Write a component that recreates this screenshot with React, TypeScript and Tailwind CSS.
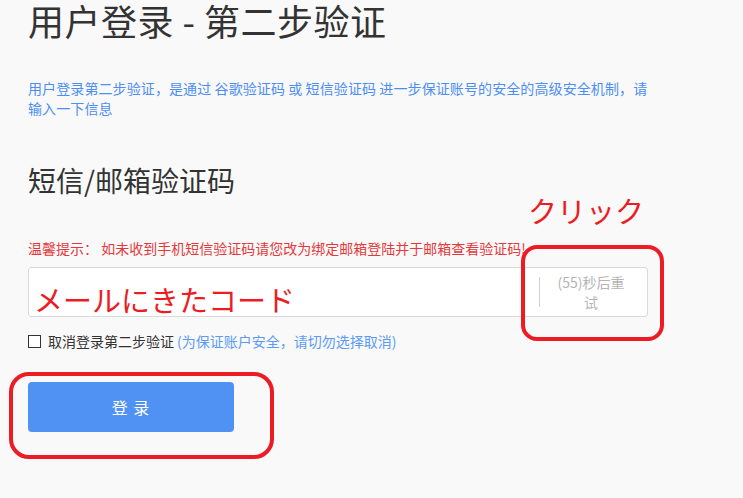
import React from "react";

const cn = '"Noto Sans CJK SC", "Noto Sans", sans-serif';
const jp = '"Noto Sans CJK JP", "Noto Sans", sans-serif';

export default function App() {
  return (
    <div
      className="relative min-h-[498px] w-full overflow-hidden bg-[#f9f9f9] pl-[28px] text-[#333]"
      style={{ fontFamily: cn }}
    >
      <div className="w-[620px]">
        <h1 className="text-[36px] leading-[40px] tracking-[0.5px] font-normal text-[#333]">用户登录 - 第二步验证</h1>
        <p className="mt-[38px] text-[14px] leading-[20px] tracking-[0.1px] text-[#4d8ef2]">
          用户登录第二步验证，是通过 谷歌验证码 或 短信验证码 进一步保证账号的安全的高级安全机制，请输入一下信息
        </p>
        <h2 className="mt-[48px] text-[28px] leading-[28px] font-normal text-[#333]">短信/邮箱验证码</h2>
        <p className="mt-[44px] text-[14px] leading-[20px] text-[#e4393c]">
          温馨提示： 如未收到手机短信验证码请您改为绑定邮箱登陆并于邮箱查看验证码!
        </p>
        <div className="mt-[9px] flex h-[50px] items-center rounded-[3px] border border-[#d9d9d9] bg-white">
          <div className="flex-1" />
          <div className="h-[30px] border-l border-[#d0d0d0]" />
          <div className="ml-[14px] mr-[19px] w-[74px] text-center text-[14px] leading-[20px] text-[#b5b5b5]">
            (55)秒后重试
          </div>
        </div>
        <div className="mt-[14px] flex items-center text-[14px] leading-[20px]">
          <span className="h-[13px] w-[13px] border border-[#333] bg-white" />
          <span className="ml-[7px] text-[#333]">取消登录第二步验证</span>
          <span className="ml-[3px] text-[#5b9bf5]">(为保证账户安全，请切勿选择取消)</span>
        </div>
        <button className="mt-[31px] flex h-[50px] w-[206px] items-center justify-center rounded-[4px] bg-[#5092f4] text-[16px] tracking-[1px] text-white">
          登&nbsp;录
        </button>
      </div>

      {/* annotations */}
      <div
        className="absolute left-[528px] top-[190px] text-[29px] leading-[40px] text-[#ed1c24]"
        style={{ fontFamily: jp }}
      >
        クリック
      </div>
      <div
        className="absolute left-[34px] top-[279px] text-[29px] leading-[40px] text-[#ed1c24]"
        style={{ fontFamily: jp }}
      >
        メールにきたコード
      </div>
      <div className="absolute left-[521px] top-[245px] h-[96px] w-[143px] rounded-[16px] border-[4px] border-[#ed1c24]" />
      <div className="absolute left-[9px] top-[372px] h-[87px] w-[265px] rounded-[20px] border-[4px] border-[#ed1c24]" />
    </div>
  );
}
